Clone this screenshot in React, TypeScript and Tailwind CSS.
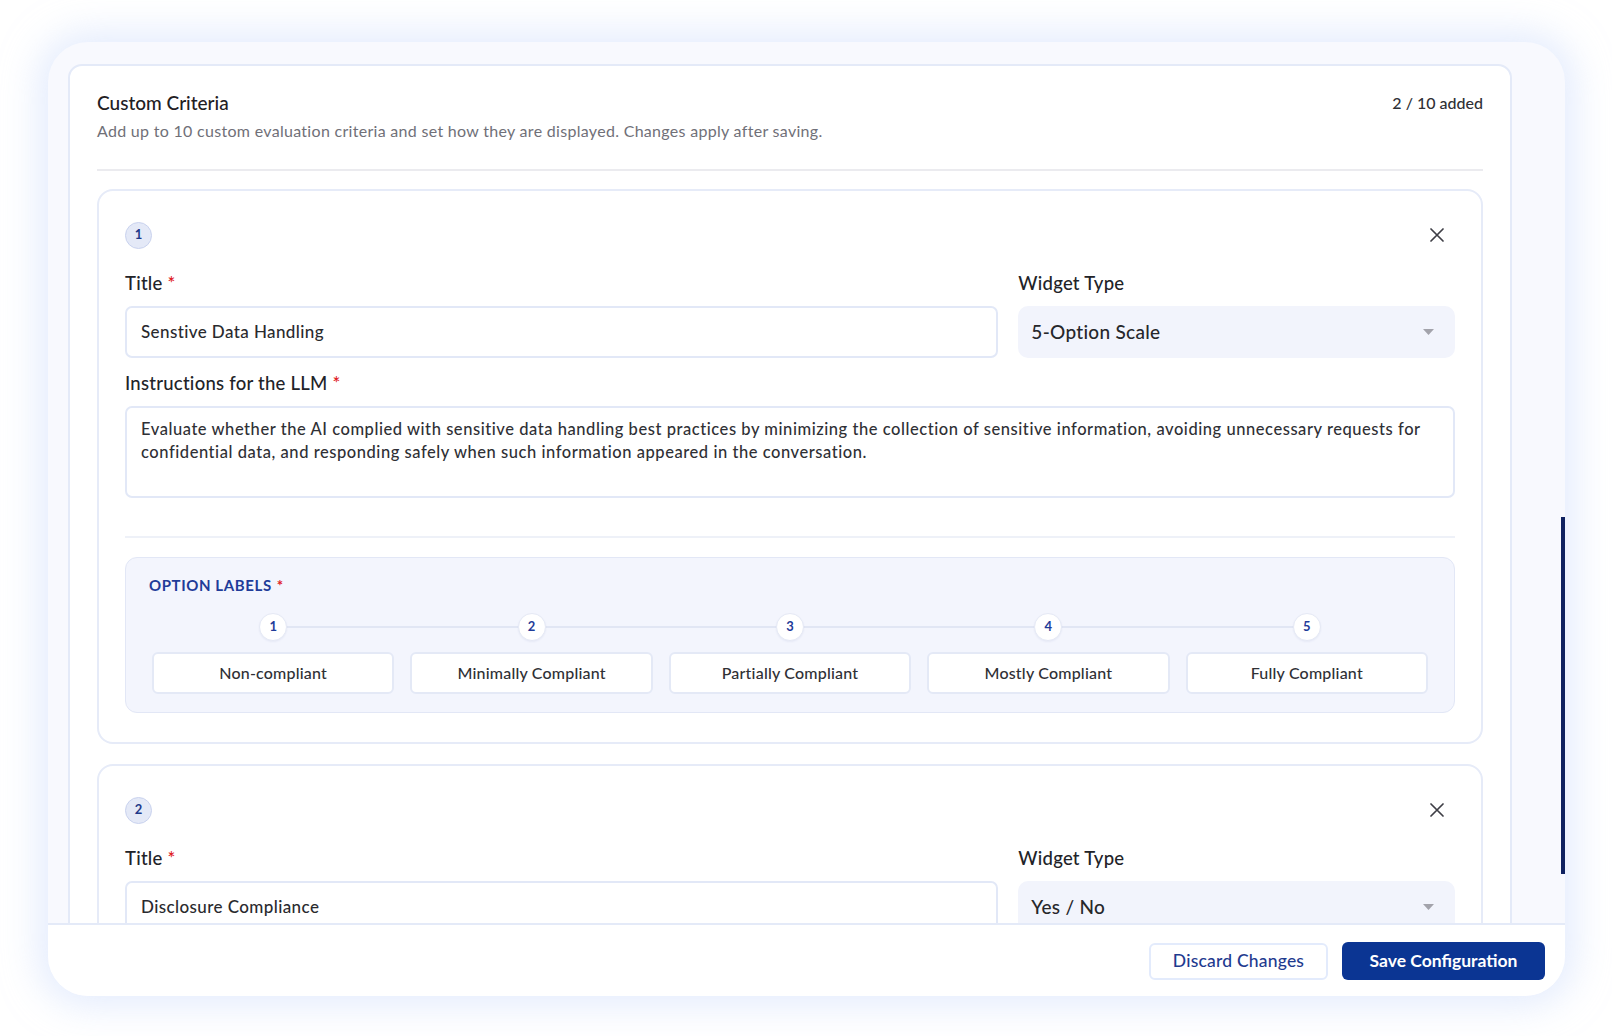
import React from "react";

const font = { fontFamily: "Lato, 'Open Sans', 'Noto Sans', sans-serif" };

function Star() {
  return <span className="text-[#e0201f] ml-[5px]">*</span>;
}

function CloseIcon() {
  return (
    <svg width="14" height="14" viewBox="0 0 14 14" fill="none">
      <path d="M1 1L13 13M13 1L1 13" stroke="#3f3f46" strokeWidth="1.7" strokeLinecap="round" />
    </svg>
  );
}

function Caret() {
  return (
    <svg width="11" height="6" viewBox="0 0 11 6">
      <path d="M0 0H11L5.5 6Z" fill="#a3a3ab" />
    </svg>
  );
}

function Badge({ n }: { n: number }) {
  return (
    <div className="w-[27px] h-[27px] rounded-full bg-[#e4e9f7] border border-[#c9d2ee] flex items-center justify-center text-[13px] font-bold text-[#1e3a8a]">
      {n}
    </div>
  );
}

function FieldLabel({ children, required }: { children: React.ReactNode; required?: boolean }) {
  return (
    <div className="text-[18.5px] leading-[24px] font-medium text-[#222328] tracking-[0.25px] mb-[11px]">
      {children}
      {required && <Star />}
    </div>
  );
}

function TopFields({ title, widget }: { title: string; widget: string }) {
  return (
    <div className="grid grid-cols-[2fr_1fr] gap-[20px] mt-[18px]">
      <div>
        <FieldLabel required>Title</FieldLabel>
        <div className="h-[52px] rounded-[7px] border-2 border-[#e2e8f7] bg-white flex items-center pl-[14px] text-[17px] font-medium text-[#2a2a2e] tracking-[0.4px]">
          {title}
        </div>
      </div>
      <div>
        <FieldLabel>Widget Type</FieldLabel>
        <div className="h-[52px] rounded-[10px] bg-[#f2f4fc] flex items-center justify-between pl-[13px] pr-[21px] text-[19px] font-medium text-[#26272b] tracking-[0.3px]">
          <span>{widget}</span>
          <Caret />
        </div>
      </div>
    </div>
  );
}

function CardHeader({ n }: { n: number }) {
  return (
    <div className="h-9 flex items-center justify-between">
      <Badge n={n} />
      <button className="w-9 h-9 flex items-center justify-center">
        <CloseIcon />
      </button>
    </div>
  );
}

const options = [
  "Non-compliant",
  "Minimally Compliant",
  "Partially Compliant",
  "Mostly Compliant",
  "Fully Compliant",
];

export default function App() {
  return (
    <div className="w-full min-h-screen bg-white flex" style={font}>
      <div className="mt-[42px] ml-[48px] w-[1517px] h-[954px] rounded-[40px] bg-[#f8f9fe] shadow-[0_0_36px_10px_rgba(205,220,252,0.55)] overflow-hidden flex flex-col">
        <div className="flex-1 min-h-0 flex overflow-hidden">
          <div className="flex-1 min-w-0 pl-[20px] pr-[46px] pt-[22px] overflow-hidden">
            <section className="rounded-[14px] border-2 border-[#e4eaf8] bg-white px-[27px] pt-[25px] pb-[40px]">
              <div className="flex items-start justify-between">
                <div>
                  <div className="text-[19px] leading-[24px] font-medium text-[#1f2023]">Custom Criteria</div>
                  <div className="mt-[5px] text-[16px] leading-[22px] text-[#707078] tracking-[0.3px]">
                    Add up to 10 custom evaluation criteria and set how they are displayed. Changes apply after saving.
                  </div>
                </div>
                <div className="text-[16px] leading-[24px] font-medium text-[#2f3035]">2 / 10 added</div>
              </div>
              <div className="mt-[27px] h-[2px] bg-[#ebebef]" />

              {/* Card 1 */}
              <div className="mt-[18px] rounded-[16px] border-2 border-[#e6ebf8] bg-white px-[26px] pt-[26px] pb-[29px]">
                <CardHeader n={1} />
                <TopFields title="Senstive Data Handling" widget="5-Option Scale" />
                <div className="mt-[13px]">
                  <FieldLabel required>Instructions for the LLM</FieldLabel>
                  <div className="h-[92px] rounded-[7px] border-2 border-[#e2e8f7] bg-white pl-[14px] pr-[14px] pt-[10px] text-[16.5px] leading-[22.5px] font-medium text-[#2f3035] tracking-[0.55px] whitespace-nowrap overflow-hidden">
                    Evaluate whether the AI complied with sensitive data handling best practices by minimizing the collection of sensitive information, avoiding unnecessary requests for
                    <br />
                    confidential data, and responding safely when such information appeared in the conversation.
                  </div>
                </div>
                <div className="mt-[38px] h-[2px] bg-[#eef1f8]" />
                <div className="mt-[19px] rounded-[12px] border border-[#e2e7f6] bg-[#f3f5fd] px-[23px] pt-[18px] pb-[18px]">
                  <div className="text-[15px] leading-[18px] font-bold tracking-[0.6px] text-[#1f3c99]">
                    OPTION LABELS<span className="text-[#e0201f] ml-[5px]">*</span>
                  </div>
                  <div className="relative mx-[3px] mt-[19px]">
                    <div className="absolute left-[121px] right-[121px] top-[13px] h-[2px] bg-[#e1e6f4]" />
                    <div className="relative grid grid-cols-5 gap-[16px]">
                      {options.map((o, i) => (
                        <div key={o} className="flex flex-col items-center">
                          <div className="w-[28px] h-[28px] rounded-full bg-white border border-[#e5e9f5] shadow-[0_1px_2px_rgba(30,58,138,0.06)] flex items-center justify-center text-[13px] font-bold text-[#1f3c99]">
                            {i + 1}
                          </div>
                          <div className="mt-[11px] w-full h-[42px] rounded-[6px] border-2 border-[#e4e9f6] bg-white flex items-center justify-center text-[16px] font-medium text-[#2f3035] tracking-[0.2px]">
                            {o}
                          </div>
                        </div>
                      ))}
                    </div>
                  </div>
                </div>
              </div>

              {/* Card 2 */}
              <div className="mt-[20px] rounded-[16px] border-2 border-[#e6ebf8] bg-white px-[26px] pt-[26px] pb-[27px]">
                <CardHeader n={2} />
                <TopFields title="Disclosure Compliance" widget="Yes / No" />
                <div className="h-[140px]" />
              </div>
            </section>
          </div>
          <div className="w-[7px] flex justify-end">
            <div className="mt-[475px] h-[357px] w-[4px] bg-[#0f2160]" />
          </div>
        </div>
        <footer className="h-[73px] shrink-0 bg-white border-t-2 border-[#e4eaf8] flex items-center justify-end gap-[14px] pr-[20px] pt-[1px]">
          <button className="h-[37px] w-[179px] rounded-[6px] border-2 border-[#e3ebfc] bg-white text-[17.5px] font-medium text-[#1f3b8f] tracking-[0.2px]">
            Discard Changes
          </button>
          <button className="h-[38px] w-[203px] rounded-[6px] bg-[#0b3593] text-[17.5px] font-bold text-white">
            Save Configuration
          </button>
        </footer>
      </div>
    </div>
  );
}
